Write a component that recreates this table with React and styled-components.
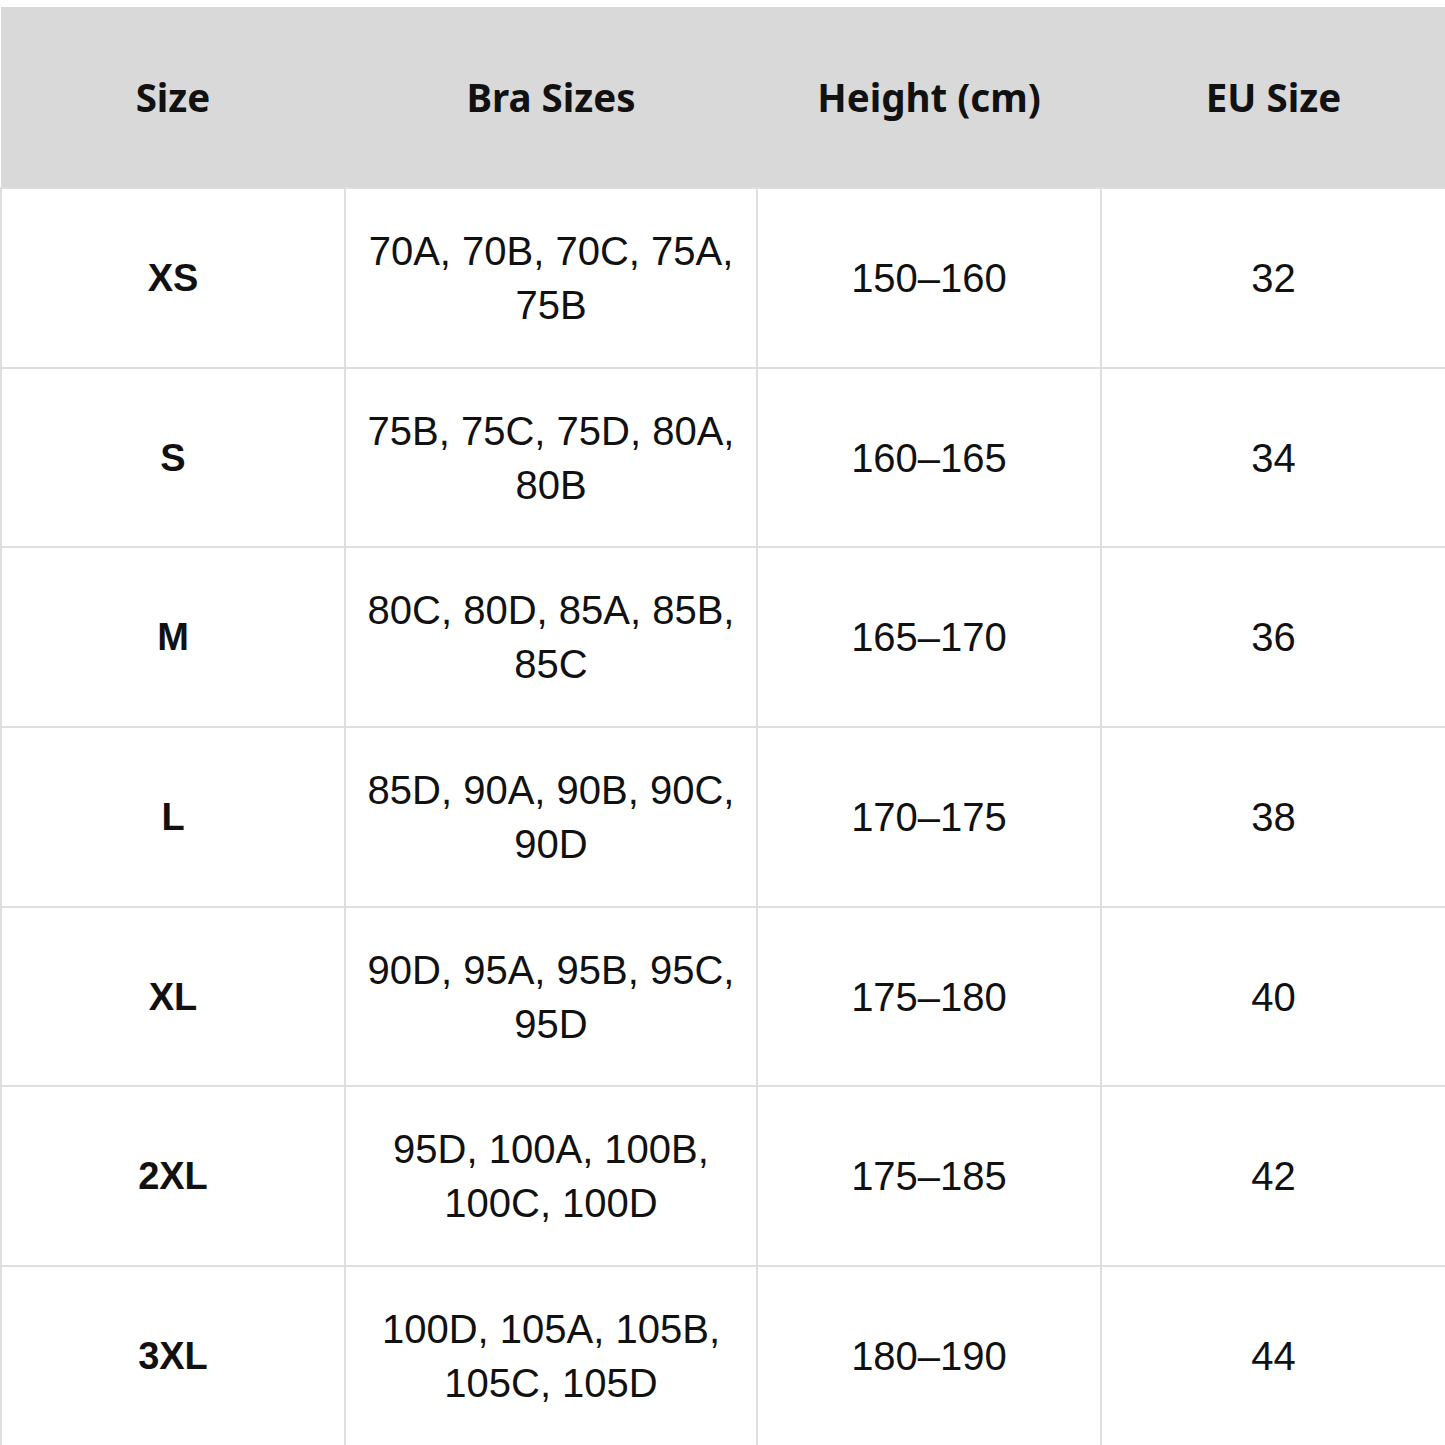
import React from "react";
import styled, { createGlobalStyle } from "styled-components";

const Global = createGlobalStyle`
  html, body { margin: 0; padding: 0; background: #ffffff; }
  body { font-family: "Liberation Sans", Arial, sans-serif; color: #111; }
`;

const Page = styled.div`
  width: 1445px;
  padding-top: 7px;
  box-sizing: border-box;
`;

const Table = styled.table`
  width: 1445px;
  border-collapse: collapse;
  table-layout: fixed;
`;

const HeadCell = styled.th`
  height: 180px;
  padding: 0;
  background: #d9d9d9;
  font-family: "Noto Sans", sans-serif;
  font-weight: 700;
  font-size: 38.5px;
  color: #111;
  text-align: center;
  vertical-align: middle;
  border: none;
`;

const Cell = styled.td`
  height: 177.7px;
  padding: 0 10px;
  border: 2px solid #dedede;
  text-align: center;
  vertical-align: middle;
  font-family: "Liberation Sans", Arial, sans-serif;
  font-weight: ${(p) => (p.$bold ? 700 : 400)};
  font-size: ${(p) => (p.$bold ? "38px" : "40px")};
  line-height: 54px;
  color: #111;
`;

const Lines = styled.div`
  display: flex;
  flex-direction: column;
  align-items: center;
`;

const rows = [
  ["XS", ["70A, 70B, 70C, 75A,", "75B"], "150–160", "32"],
  ["S", ["75B, 75C, 75D, 80A,", "80B"], "160–165", "34"],
  ["M", ["80C, 80D, 85A, 85B,", "85C"], "165–170", "36"],
  ["L", ["85D, 90A, 90B, 90C,", "90D"], "170–175", "38"],
  ["XL", ["90D, 95A, 95B, 95C,", "95D"], "175–180", "40"],
  ["2XL", ["95D, 100A, 100B,", "100C, 100D"], "175–185", "42"],
  ["3XL", ["100D, 105A, 105B,", "105C, 105D"], "180–190", "44"],
];

export default function App() {
  return (
    <Page>
      <Global />
      <Table>
        <colgroup>
          <col style={{ width: 344 }} />
          <col style={{ width: 412 }} />
          <col style={{ width: 344 }} />
          <col style={{ width: 345 }} />
        </colgroup>
        <thead>
          <tr>
            <HeadCell>Size</HeadCell>
            <HeadCell>Bra Sizes</HeadCell>
            <HeadCell>Height (cm)</HeadCell>
            <HeadCell>EU Size</HeadCell>
          </tr>
        </thead>
        <tbody>
          {rows.map(([size, bras, height, eu]) => (
            <tr key={size}>
              <Cell $bold>{size}</Cell>
              <Cell>
                <Lines>
                  {bras.map((l) => (
                    <span key={l}>{l}</span>
                  ))}
                </Lines>
              </Cell>
              <Cell>{height}</Cell>
              <Cell>{eu}</Cell>
            </tr>
          ))}
        </tbody>
      </Table>
    </Page>
  );
}
